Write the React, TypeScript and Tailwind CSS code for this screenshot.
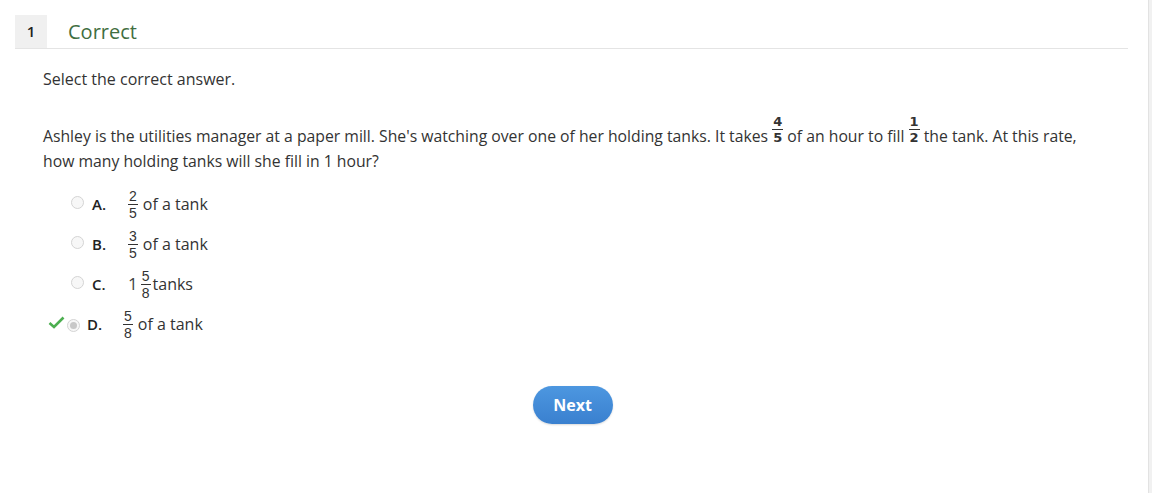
import React from "react";

function Frac({ n, d, cls = "" }: { n: string; d: string; cls?: string }) {
  return (
    <span className={`inline-block text-center leading-none ${cls}`}>
      <span className="block border-b border-[#333] px-[1px] pb-[1px]">{n}</span>
      <span className="block pt-[1px]">{d}</span>
    </span>
  );
}

function Radio({ selected = false }: { selected?: boolean }) {
  return (
    <span className="inline-flex h-[13px] w-[13px] items-center justify-center rounded-full border border-[#d4d4d4] bg-[#f7f7f7]">
      {selected && <span className="h-[7px] w-[7px] rounded-full bg-[#c8c8c8]" />}
    </span>
  );
}

function Option({
  letter,
  children,
  correct = false,
}: {
  letter: string;
  children: React.ReactNode;
  correct?: boolean;
}) {
  return (
    <div className="flex h-[40px] items-center">
      <div className={`flex items-center ${correct ? "ml-[5px]" : "ml-[28px]"}`}>
        {correct && (
          <svg width="17" height="13" viewBox="0 0 17 13" className="mr-[2px] -mt-[4px]">
            <path d="M1.5 7 L6 11 L15.5 1.5" fill="none" stroke="#4caf50" strokeWidth="2.6" />
          </svg>
        )}
        <span className="-mt-[2px]"><Radio selected={correct} /></span>
        <span className={`w-[36px] font-semibold text-[15px] text-[#222] ${correct ? "ml-[7px]" : "ml-[8px]"}`}>
          {letter}
        </span>
      </div>
      <div className="flex items-center text-[16px] text-[#333]">{children}</div>
    </div>
  );
}

export default function App() {
  return (
    <div
      className="flex min-h-[493px] w-full bg-white"
      style={{ fontFamily: '"Open Sans", "Noto Sans", sans-serif' }}
    >
      <div className="flex-1 pl-[15px] pr-[20px] pt-[15px]">
        <div className="flex h-[34px] items-stretch border-b border-[#e4e4e4]">
          <div className="flex w-[32px] items-center justify-center bg-[#f0f0f0] text-[15px] font-semibold text-[#222]">
            1
          </div>
          <div className="ml-[21px] flex items-center text-[20px] font-medium text-[#3f6e41]">Correct</div>
        </div>

        <div className="pl-[28px] pr-[20px] text-[16px] text-[#333]">
          <p className="mt-[19px] leading-[22px]">Select the correct answer.</p>
          <p className="mt-[25px] leading-[25px] text-[15.75px]">
            Ashley is the utilities manager at a paper mill. She's watching over one of her holding tanks. It takes{" "}
            <Frac n="4" d="5" cls="text-[13px] font-bold font-['DejaVu_Sans']" />{" "}
            of an hour to fill{" "}
            <Frac n="1" d="2" cls="text-[13px] font-bold font-['DejaVu_Sans']" />{" "}
            the tank. At this rate, how many holding tanks will she fill in 1 hour?
          </p>

          <div className="mt-[10px]">
            <Option letter="A.">
              <Frac n="2" d="5" cls="text-[14px] mr-[5px] font-['Liberation_Sans_Narrow','Liberation_Sans',sans-serif]" />
              <span>of a tank</span>
            </Option>
            <Option letter="B.">
              <Frac n="3" d="5" cls="text-[14px] mr-[5px] font-['Liberation_Sans_Narrow','Liberation_Sans',sans-serif]" />
              <span>of a tank</span>
            </Option>
            <Option letter="C.">
              <span className="mr-[3px] text-[17px] text-[#444]">1</span>
              <Frac n="5" d="8" cls="text-[14px] mr-[2px] font-['Liberation_Sans_Narrow','Liberation_Sans',sans-serif]" />
              <span>tanks</span>
            </Option>
            <Option letter="D." correct>
              <Frac n="5" d="8" cls="text-[14px] mr-[5px] font-['Liberation_Sans_Narrow','Liberation_Sans',sans-serif]" />
              <span>of a tank</span>
            </Option>
          </div>

          <div className="mt-[42px] flex justify-center pr-[6px]">
            <button className="h-[38px] w-[80px] rounded-full bg-gradient-to-b from-[#4d97e0] to-[#3a80cf] text-[16px] font-bold text-white shadow-[0_1px_2px_rgba(0,0,0,0.15)]">
              Next
            </button>
          </div>
        </div>
      </div>
      <div className="w-[4px] border-l border-[#e2e2e2] bg-[#f1f1f1]" />
    </div>
  );
}
